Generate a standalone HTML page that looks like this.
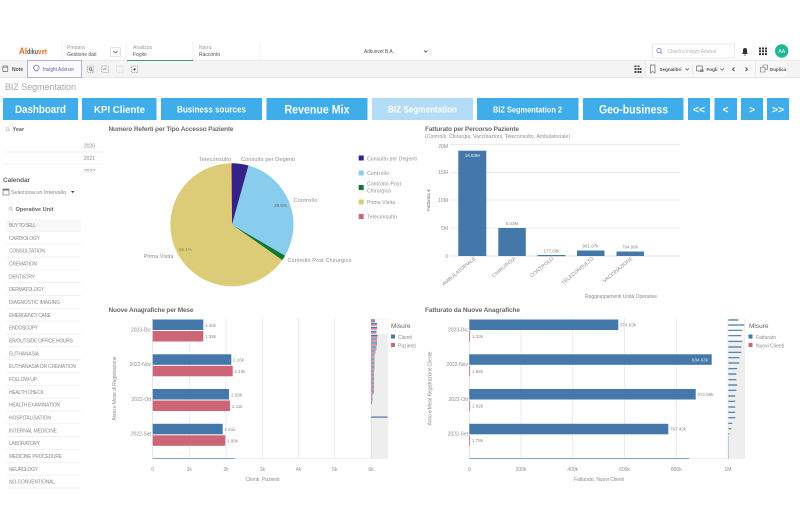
<!DOCTYPE html>
<html><head><meta charset="utf-8"><style>
html,body{margin:0;padding:0;background:#fff;overflow:hidden}
svg{display:block;font-family:"Liberation Sans",sans-serif;filter:blur(.3px)}
text{fill:#8c8c8c;font-size:5.5px}
.b{fill:#fff;font-weight:bold;text-anchor:middle}
.t{fill:#6a6a6a;font-weight:bold;font-size:6.5px}
.l{fill:#8f8f8f;font-size:5px}
.g{stroke:#e6e6e6;stroke-width:.8}
.r{stroke:#eeeeee;stroke-width:.7}
</style></head><body>
<svg width="800" height="530" viewBox="0 0 800 530" xmlns="http://www.w3.org/2000/svg">
<rect width="800" height="530" fill="#fff"/>

<!-- header -->
<text x="19" y="54" style="font-size:9px;font-weight:bold;fill:#e2711d" textLength="8" lengthAdjust="spacingAndGlyphs">AI</text>
<text x="27" y="54" style="font-size:7px;font-weight:bold;fill:#5b5b5b" textLength="11" lengthAdjust="spacingAndGlyphs">diku</text>
<text x="38" y="54" style="font-size:7px;font-weight:bold;fill:#e2711d" textLength="9" lengthAdjust="spacingAndGlyphs">vet</text>
<path d="M62 41V60M126 41V60M193 41V60M260 41V60" stroke="#efefef" stroke-width=".8"/>
<text x="67" y="49" style="font-size:5px;fill:#999">Prepara</text>
<text x="67" y="56" style="font-size:5px;fill:#555">Gestione dati</text>
<rect x="110.500" y="47.500" width="10" height="9" rx="1" fill="#fff" stroke="#ccc" stroke-width=".6"/>
<path d="M113.500 51l2 2 2-2" fill="none" stroke="#555" stroke-width=".7"/>
<text x="133" y="49" style="font-size:5px;fill:#999">Analizza</text>
<text x="133" y="56" style="font-size:5px;fill:#555">Foglio</text>
<text x="199" y="49" style="font-size:5px;fill:#999">Narra</text>
<text x="199" y="56" style="font-size:5px;fill:#555">Racconto</text>
<text x="364" y="53" style="font-size:5.500px;fill:#555" textLength="30" lengthAdjust="spacingAndGlyphs">Adkunvet B.A.</text>
<path d="M424 50.500l1.700 1.700 1.700-1.700" fill="none" stroke="#444" stroke-width=".8"/>
<rect x="652.500" y="44" width="82" height="14" rx="1.500" fill="#fff" stroke="#e4e4e4" stroke-width=".8"/>
<circle cx="659" cy="50.500" r="2.200" fill="none" stroke="#8a85c6" stroke-width=".8"/>
<path d="M660.600 52.200l1.800 1.800" stroke="#8a85c6" stroke-width=".8"/>
<text x="667.500" y="53" style="font-size:5px;fill:#b5b5b5" textLength="49" lengthAdjust="spacingAndGlyphs">Chiedi a Insight Advisor</text>
<path d="M742 54h6l-1-1.500v-2.500a2 2 0 0 0-4 0v2.500zM744.300 54.500h1.400v1h-1.400z" fill="#333"/>
<path d="M759 48h2v2h-2zM762 48h2v2h-2zM765 48h2v2h-2zM759 50.800h2v2h-2zM762 50.800h2v2h-2zM765 50.800h2v2h-2zM759 53.600h2v2h-2zM762 53.600h2v2h-2zM765 53.600h2v2h-2z" fill="#333" transform="translate(0 -.5)"/>
<circle cx="781.700" cy="51" r="6.700" fill="#1fb893"/>
<text x="781.700" y="53" style="font-size:5px;fill:#fff;text-anchor:middle">AA</text>

<!-- toolbar -->
<rect x="0" y="60.500" width="800" height="17" fill="#f4f4f4"/>
<path d="M0 60.500H800" stroke="#e4e4e4" stroke-width=".7"/>
<path d="M0 77.500H800" stroke="#dcdcdc" stroke-width=".8"/>
<rect x="127" y="60" width="66" height="1" fill="#3f9a6c"/>
<rect x="2.800" y="66" width="5" height="5.500" rx=".7" fill="none" stroke="#666" stroke-width=".7"/>
<path d="M2.800 67.300h5" stroke="#666" stroke-width=".5"/>
<text x="12" y="71" style="font-size:5px;fill:#555;font-weight:bold">Note</text>
<rect x="27.500" y="60.500" width="54" height="17" fill="#fbfbfb" stroke="#a29fd3" stroke-width=".8"/>
<path d="M33.500 68a2.800 2.800 0 0 1 5.600 0c0 1-1.600 1.400-1.600 2.800h-2.400c0-1.400-1.600-1.800-1.600-2.800z" fill="none" stroke="#8a85c6" stroke-width=".9"/>
<text x="43" y="71" style="font-size:5px;fill:#8a85c6;font-weight:bold" textLength="31" lengthAdjust="spacingAndGlyphs">Insight Advisor</text>
<rect x="87.300" y="66" width="6.500" height="6.500" fill="none" stroke="#888" stroke-width=".7" stroke-dasharray="1 1"/>
<circle cx="90.500" cy="69" r="1.300" fill="none" stroke="#555" stroke-width=".6"/>
<path d="M91.500 70l1.300 1.300" stroke="#555" stroke-width=".6"/>
<rect x="101.800" y="66" width="6.500" height="6.500" fill="none" stroke="#888" stroke-width=".7" stroke-dasharray="1 1"/>
<path d="M103.300 69h3l-1-1M103.300 69l1 1" fill="none" stroke="#666" stroke-width=".5"/>
<rect x="116.500" y="66" width="6.500" height="6.500" fill="none" stroke="#ccc" stroke-width=".7" stroke-dasharray="1 1"/>
<rect x="131.300" y="66" width="6.500" height="6.500" fill="none" stroke="#888" stroke-width=".7" stroke-dasharray="1 1"/>
<circle cx="134.500" cy="69.300" r="1.100" fill="#444"/>
<rect x="646" y="61" width="109" height="16" fill="#f8f8f8"/>
<rect x="756" y="61" width="30" height="16" fill="#f8f8f8"/>
<rect x="755.300" y="61" width=".7" height="16" fill="#e6e6e6"/>
<rect x="645.500" y="61" width=".7" height="16" fill="#e6e6e6"/>
<rect x="692.500" y="64" width=".6" height="10" fill="#ddd"/>
<path d="M634.500 65.500h2v1.500h-2zM637.500 65.500h2v1.500h-2zM634.500 68h2v2h-2zM637.500 68h2v2h-2zM640 68h1.500v2H640zM634.500 71h2v2h-2zM637.500 71h2v2h-2zM640 71h1.500v2H640z" fill="#444"/>
<path d="M650.500 65h4.500v8l-2.250-1.500L650.500 73z" fill="none" stroke="#666" stroke-width=".7"/>
<text x="659.500" y="71" style="font-size:4.800px;fill:#555;font-weight:bold" textLength="22" lengthAdjust="spacingAndGlyphs">Segnalibri</text>
<path d="M685.500 68.500l1.700 1.700 1.700-1.700" fill="none" stroke="#555" stroke-width=".7"/>
<rect x="696.500" y="66" width="6" height="5" rx=".7" fill="none" stroke="#666" stroke-width=".7"/>
<rect x="700" y="69.500" width="3.500" height="2.500" fill="#888"/>
<text x="706.500" y="71" style="font-size:4.800px;fill:#555;font-weight:bold" textLength="11" lengthAdjust="spacingAndGlyphs">Fogli</text>
<path d="M720.500 68.500l1.700 1.700 1.700-1.700" fill="none" stroke="#555" stroke-width=".7"/>
<path d="M734.500 67.500l-1.800 1.800 1.800 1.800M745.500 67.500l1.800 1.800-1.800 1.800" fill="none" stroke="#444" stroke-width=".9"/>
<path d="M760.500 67.500h4.500v4.500h-4.500zM763 67.500v-2.500h4.500v4.500H765" fill="none" stroke="#666" stroke-width=".6"/>
<text x="770" y="71" style="font-size:4.800px;fill:#555;font-weight:bold" textLength="16" lengthAdjust="spacingAndGlyphs">Duplica</text>

<!-- title -->
<text x="5" y="90" style="font-size:9px;fill:#a8a8a8" textLength="71">BIZ Segmentation</text>

<!-- nav buttons -->
<g fill="#3fadea">
<rect x="3" y="98" width="75" height="22"/><rect x="82" y="98" width="74.500" height="22"/><rect x="161" y="98" width="101" height="22"/><rect x="266.500" y="98" width="101" height="22"/>
<rect x="372" y="98" width="101" height="22" fill="#b3dcf6"/>
<rect x="477" y="98" width="101.500" height="22"/><rect x="583" y="98" width="100.500" height="22"/>
<rect x="688" y="98" width="22" height="22"/><rect x="714.500" y="98" width="22.500" height="22"/><rect x="741" y="98" width="22" height="22"/><rect x="767" y="98" width="22" height="22"/>
</g>
<text class="b" x="40.500" y="113" style="font-size:11px" textLength="51" lengthAdjust="spacingAndGlyphs">Dashboard</text>
<text class="b" x="119.500" y="113" style="font-size:10.500px" textLength="51" lengthAdjust="spacingAndGlyphs">KPI Cliente</text>
<text class="b" x="211.500" y="112.500" style="font-size:9px" textLength="69" lengthAdjust="spacingAndGlyphs">Business sources</text>
<text class="b" x="317" y="113.500" style="font-size:12px" textLength="65" lengthAdjust="spacingAndGlyphs">Revenue Mix</text>
<text class="b" x="422.500" y="112.500" style="font-size:9px" textLength="69" lengthAdjust="spacingAndGlyphs">BIZ Segmentation</text>
<text class="b" x="527.500" y="112.500" style="font-size:8.500px" textLength="69" lengthAdjust="spacingAndGlyphs">BIZ Segmentation 2</text>
<text class="b" x="633.500" y="113.500" style="font-size:12px" textLength="69" lengthAdjust="spacingAndGlyphs">Geo-business</text>
<text class="b" x="699" y="113" style="font-size:10px" textLength="12" lengthAdjust="spacingAndGlyphs">&lt;&lt;</text>
<text class="b" x="725.500" y="113" style="font-size:10px">&lt;</text>
<text class="b" x="752" y="113" style="font-size:10px">&gt;</text>
<text class="b" x="778" y="113" style="font-size:10px" textLength="12" lengthAdjust="spacingAndGlyphs">&gt;&gt;</text>

<!-- sidebar -->
<circle cx="7.500" cy="129" r="1.500" fill="none" stroke="#aaa" stroke-width=".6"/><path d="M8.500 130l1.200 1.200" stroke="#aaa" stroke-width=".6"/>
<text x="12.500" y="131" style="font-size:5.500px;font-weight:bold;fill:#666">Year</text>
<path d="M3 152H104M3 164H104" stroke="#ececec" stroke-width=".7"/>
<text x="95" y="147.500" style="font-size:5px;text-anchor:end">2020</text>
<text x="95" y="160" style="font-size:5px;text-anchor:end">2021</text>
<clipPath id="yc"><rect x="0" y="165" width="105" height="6.700"/></clipPath>
<text x="95" y="173" style="font-size:5px;text-anchor:end" clip-path="url(#yc)">2022</text>
<text x="3" y="182" style="font-size:6.500px;font-weight:bold;fill:#666" textLength="27">Calendar</text>
<rect x="3" y="189" width="6" height="6" fill="#fff" stroke="#777" stroke-width=".7"/>
<rect x="3" y="189" width="6" height="1.500" fill="#777"/>
<text x="11" y="194" style="font-size:5.500px;fill:#888" textLength="55">Seleziona un Intervallo</text>
<path d="M71 191h3.500l-1.750 2.300z" fill="#444"/>
<circle cx="10.500" cy="208.500" r="1.500" fill="none" stroke="#aaa" stroke-width=".6"/><path d="M11.500 209.500l1.200 1.200" stroke="#aaa" stroke-width=".6"/>
<text x="15.500" y="211" style="font-size:5.500px;font-weight:bold;fill:#666" textLength="38">Operative Unit</text>
<rect x="6" y="219" width="75" height="12" fill="#f8f8f8"/>
<path class="r" d="M6 231.300H81M6 244.100H81M6 257H81M6 269.800H81M6 282.600H81M6 295.500H81M6 308.300H81M6 321.100H81M6 334H81M6 346.800H81M6 359.600H81M6 372.500H81M6 385.300H81M6 398.100H81M6 411H81M6 423.800H81M6 436.600H81M6 449.500H81M6 462.300H81M6 475.100H81M6 488H81"/>
<g>
<text x="9" y="227" style="font-size:5px" textLength="27">BUY TO SELL</text>
<text x="9" y="239.800" style="font-size:5px" textLength="31">CARDIOLOGY</text>
<text x="9" y="252.600" style="font-size:5px" textLength="36">CONSULTATION</text>
<text x="9" y="265.500" style="font-size:5px" textLength="28">CREMATION</text>
<text x="9" y="278.300" style="font-size:5px" textLength="26">DENTISTRY</text>
<text x="9" y="291.100" style="font-size:5px" textLength="35">DERMATOLOGY</text>
<text x="9" y="304" style="font-size:5px" textLength="51">DIAGNOSTIC IMAGING</text>
<text x="9" y="316.800" style="font-size:5px" textLength="42">EMERGENCY CARE</text>
<text x="9" y="329.600" style="font-size:5px" textLength="29">ENDOSCOPY</text>
<text x="9" y="342.500" style="font-size:5px" textLength="64">ER/OUTSIDE OFFICE HOURS</text>
<text x="9" y="355.300" style="font-size:5px" textLength="30">EUTHANASIA</text>
<text x="9" y="368.100" style="font-size:5px" textLength="67">EUTHANASIA OR CREMATION</text>
<text x="9" y="381" style="font-size:5px" textLength="28">FOLLOW-UP</text>
<text x="9" y="393.800" style="font-size:5px" textLength="35">HEALTH CHECK</text>
<text x="9" y="406.600" style="font-size:5px" textLength="51">HEALTH EXAMINATION</text>
<text x="9" y="419.500" style="font-size:5px" textLength="42">HOSPITALISATION</text>
<text x="9" y="432.300" style="font-size:5px" textLength="48">INTERNAL MEDICINE</text>
<text x="9" y="445.100" style="font-size:5px" textLength="31">LABORATORY</text>
<text x="9" y="458" style="font-size:5px" textLength="53">MEDICINE PROCEDURE</text>
<text x="9" y="470.800" style="font-size:5px" textLength="29">NEUROLOGY</text>
<text x="9" y="483.600" style="font-size:5px" textLength="46">NO-CONVENTIONAL</text>
</g>

<!-- pie -->
<text class="t" x="108.500" y="131" textLength="125">Numero Referti per Tipo Accesso Paziente</text>
<path d="M232 224.700L232 163.200A61.500 61.500 0 0 1 248.500 165.500Z" fill="#332288"/>
<path d="M232 224.700L248.500 165.500A61.500 61.500 0 0 1 285.100 255.700Z" fill="#88ccee"/>
<path d="M232 224.700L285.100 255.700A61.500 61.500 0 0 1 282.200 260.100Z" fill="#117733"/>
<path d="M232 224.700L282.200 260.100A61.500 61.500 0 1 1 230.900 163.200Z" fill="#ddcc77"/>
<path d="M232 224.700L230.900 163.200L232 163.200Z" fill="#cc6677"/>
<text x="199" y="161" style="font-size:5.500px" textLength="32">Teleconsulto</text>
<text x="241" y="161" style="font-size:5.500px" textLength="54">Consulto per Degenti</text>
<text x="293.500" y="202" style="font-size:5.500px" textLength="24">Controllo</text>
<text x="287.500" y="262" style="font-size:5.500px" textLength="64">Controllo Post Chirurgico</text>
<text x="143.500" y="258" style="font-size:5.500px" textLength="30">Prima Visita</text>
<text x="274" y="207" style="font-size:4.500px;fill:#666">39.5%</text>
<text x="179" y="251" style="font-size:4.500px;fill:#8b8552">65.1%</text>
<rect x="358.700" y="155.500" width="5" height="5" fill="#332288"/><text x="367" y="160.500" style="font-size:5px" textLength="50">Consulto per Degenti</text>
<rect x="358.700" y="170.500" width="5" height="5" fill="#88ccee"/><text x="367" y="175" style="font-size:5px" textLength="22">Controllo</text>
<rect x="358.700" y="185" width="5" height="5" fill="#117733"/><text x="367" y="185.500" style="font-size:5px" textLength="34">Controllo Post</text><text x="367" y="192.500" style="font-size:5px" textLength="24">Chirurgico</text>
<rect x="358.700" y="199.500" width="5" height="5" fill="#ddcc77"/><text x="367" y="204" style="font-size:5px" textLength="28">Prima Visita</text>
<rect x="358.700" y="214" width="5" height="5" fill="#cc6677"/><text x="367" y="218.500" style="font-size:5px" textLength="30">Teleconsulto</text>

<!-- column chart -->
<text class="t" x="425" y="131" textLength="94">Fatturato per Percorso Paziente</text>
<text x="425" y="138" style="font-size:5px" textLength="145">(Controlli, Chirurgia, Vaccinazioni, Teleconsulto, Ambulatoriale)</text>
<path class="g" d="M450 144.300H680M450 172.300H680M450 200H680M450 228H680"/>
<path d="M450 256H680" stroke="#d8d8d8" stroke-width=".8"/>
<g fill="#4477aa">
<rect x="458.300" y="150.700" width="28" height="105.300"/>
<rect x="498.300" y="228" width="27.500" height="28"/>
<rect x="537.500" y="255" width="28" height="1.200"/>
<rect x="577" y="250.500" width="27.500" height="5.500"/>
<rect x="616.500" y="251.500" width="27.500" height="4.500"/>
</g>
<text x="448" y="148" class="l" text-anchor="end">20M</text>
<text x="448" y="174" class="l" text-anchor="end">15M</text>
<text x="448" y="202" class="l" text-anchor="end">10M</text>
<text x="448" y="230" class="l" text-anchor="end">5M</text>
<text x="448" y="258" class="l" text-anchor="end">0</text>
<text x="472.300" y="157" style="font-size:4.500px;fill:#e8eef5;text-anchor:middle">18.83M</text>
<text x="512" y="225" style="font-size:4.500px;text-anchor:middle">5.03M</text>
<text x="551.500" y="252.500" style="font-size:4.500px;text-anchor:middle">177.68k</text>
<text x="590.500" y="247.500" style="font-size:4.500px;text-anchor:middle">981.07k</text>
<text x="630" y="248.500" style="font-size:4.500px;text-anchor:middle">794.98k</text>
<text transform="translate(430 200) rotate(-90)" style="font-size:4.500px;fill:#666;text-anchor:middle">Fatturato €</text>
<text transform="translate(476 259) rotate(-40)" style="font-size:5px;text-anchor:end" textLength="42">AMBULATORIALE</text>
<text transform="translate(516 259) rotate(-40)" style="font-size:5px;text-anchor:end" textLength="29">CHIRURGIA</text>
<text transform="translate(554 259) rotate(-40)" style="font-size:5px;text-anchor:end" textLength="29">CONTROLLI</text>
<text transform="translate(594 259) rotate(-40)" style="font-size:5px;text-anchor:end" textLength="40">TELECONSULTO</text>
<text transform="translate(633 259) rotate(-40)" style="font-size:5px;text-anchor:end" textLength="37">VACCINAZIONE</text>
<text x="585" y="298" style="font-size:5px" textLength="72">Raggruppamenti Unità Operative</text>

<!-- chart 3 -->
<text class="t" x="108.500" y="312" textLength="85">Nuove Anagrafiche per Mese</text>
<path class="g" d="M189.300 318V459M226 318V459M262.500 318V459M298.500 318V459M334.700 318V459M371 318V459"/>
<path d="M152.700 318V459" stroke="#ddd" stroke-width=".8"/>
<g fill="#4477aa"><rect x="152.700" y="319.500" width="50.600" height="10.500"/><rect x="152.700" y="354.300" width="78.600" height="10.500"/><rect x="152.700" y="389" width="76.300" height="10.500"/><rect x="152.700" y="423.800" width="70" height="10.500"/></g>
<g fill="#cc6677"><rect x="152.700" y="331" width="50.600" height="10.500"/><rect x="152.700" y="365.800" width="80" height="10.500"/><rect x="152.700" y="400.500" width="77.300" height="10.500"/><rect x="152.700" y="435.300" width="72.600" height="10.500"/></g>
<text x="205" y="327" style="font-size:4.500px">1.38k</text><text x="205" y="338" style="font-size:4.500px">1.38k</text>
<text x="233" y="361.500" style="font-size:4.500px">2.16k</text><text x="234.500" y="373" style="font-size:4.500px">2.19k</text>
<text x="231" y="396.500" style="font-size:4.500px">2.09k</text><text x="232" y="408" style="font-size:4.500px">2.11k</text>
<text x="224.500" y="431" style="font-size:4.500px">1.91k</text><text x="227" y="442.500" style="font-size:4.500px">1.98k</text>
<text x="151" y="331.500" style="font-size:5px" text-anchor="end">2023-Dic</text>
<text x="151" y="366" style="font-size:5px" text-anchor="end">2022-Nov</text>
<text x="151" y="401" style="font-size:5px" text-anchor="end">2022-Ott</text>
<text x="151" y="435.500" style="font-size:5px" text-anchor="end">2022-Set</text>
<text transform="translate(116 388.500) rotate(-90)" style="font-size:5px;text-anchor:middle" textLength="64">Anno e Mese di Registrazione</text>
<text x="152.700" y="471" class="l" text-anchor="middle">0</text><text x="189.300" y="471" class="l" text-anchor="middle">1k</text><text x="226" y="471" class="l" text-anchor="middle">2k</text><text x="262.500" y="471" class="l" text-anchor="middle">3k</text><text x="298.500" y="471" class="l" text-anchor="middle">4k</text><text x="334.700" y="471" class="l" text-anchor="middle">5k</text><text x="371" y="471" class="l" text-anchor="middle">6k</text>
<text x="245.500" y="481" style="font-size:5px" textLength="34">Clienti, Pazienti</text>
<rect x="152.700" y="458" width="82" height="1" fill="#7fa3c8"/>
<rect x="235" y="458" width="136" height="1" fill="#eee"/>
<rect x="371" y="319" width="17" height="140" fill="#eeeeee"/>
<rect x="371" y="319" width="17" height="15.500" fill="#fff" stroke="#e2e2e2" stroke-width=".4"/>
<path d="M371 320h4M371 323.500h6M371 327.500h6M371 331.500h5.500M371 335.500h6.500M371 339h6M371 343h6M371 347h5.500M371 351h4.500M371 355h3.500M371 359h3.500M371 363h3.500M371 367h3.500M371 371h3M371 375h3M371 379h3M371 383h3M371 387h3M371 391h3M371 395h1.500M371 399h1.500M371 403h1" stroke="#4477aa" stroke-width="1.200"/>
<path d="M371 321.500h4M371 325h6M371 329h6M371 333h5.500M371 337h6.500M371 341h6M371 345h6M371 349h5.500M371 353h4.500M371 357h3.500M371 361h3.500M371 365h3.500M371 369h3.500M371 373h3M371 377h3M371 381h3M371 385h3M371 389h3M371 393h3M371 397h1.500M371 401h1.500" stroke="#cc6677" stroke-width="1.200"/>
<rect x="371" y="416.500" width="16.500" height="1.200" fill="#4477aa"/>
<path d="M371.300 404V459" stroke="#ccc" stroke-width=".5" stroke-dasharray="1 1"/>
<text x="391" y="328" style="font-size:6.500px;fill:#666">Misure</text>
<rect x="391" y="334.500" width="4" height="4" fill="#4477aa"/><text x="398" y="339" style="font-size:5px">Clienti</text>
<rect x="391" y="343" width="4" height="4" fill="#cc6677"/><text x="398" y="347.500" style="font-size:5px">Pazienti</text>

<!-- chart 4 -->
<text class="t" x="425" y="312" textLength="95">Fatturato da Nuove Anagrafiche</text>
<path class="g" d="M521 318V459M572.700 318V459M624.500 318V459M676.300 318V459M728 318V459"/>
<path d="M469.300 318V459" stroke="#ddd" stroke-width=".8"/>
<g fill="#4477aa"><rect x="469.300" y="319.500" width="149" height="10.500"/><rect x="469.300" y="354.300" width="242.400" height="10.500"/><rect x="469.300" y="389" width="226.400" height="10.500"/><rect x="469.300" y="423.800" width="199" height="10.500"/></g>
<g fill="#cc6677"><rect x="469.300" y="331" width=".8" height="10.500"/><rect x="469.300" y="365.800" width=".8" height="10.500"/><rect x="469.300" y="400.500" width=".8" height="10.500"/><rect x="469.300" y="435.300" width=".8" height="10.500"/></g>
<text x="620" y="326.500" style="font-size:4.500px">574.83k</text><text x="472" y="338" style="font-size:4.500px">1.33k</text>
<text x="692" y="361.500" style="font-size:4.500px;fill:#dfe8f1">934.63k</text><text x="472" y="373" style="font-size:4.500px">1.98k</text>
<text x="697.500" y="396" style="font-size:4.500px">872.68k</text><text x="472" y="407.500" style="font-size:4.500px">1.92k</text>
<text x="670" y="430.500" style="font-size:4.500px">767.42k</text><text x="472" y="442" style="font-size:4.500px">1.78k</text>
<text x="468" y="331.500" style="font-size:5px" text-anchor="end">2023-Dic</text>
<text x="468" y="366" style="font-size:5px" text-anchor="end">2022-Nov</text>
<text x="468" y="401" style="font-size:5px" text-anchor="end">2022-Ott</text>
<text x="468" y="435.500" style="font-size:5px" text-anchor="end">2022-Set</text>
<text transform="translate(431.500 388.500) rotate(-90)" style="font-size:5px;text-anchor:middle" textLength="74">Anno e Mese Registrazione Cliente</text>
<text x="469.300" y="471" class="l" text-anchor="middle">0</text><text x="521" y="471" class="l" text-anchor="middle">200k</text><text x="572.700" y="471" class="l" text-anchor="middle">400k</text><text x="624.500" y="471" class="l" text-anchor="middle">600k</text><text x="676.300" y="471" class="l" text-anchor="middle">800k</text><text x="728" y="471" class="l" text-anchor="middle">1M</text>
<text x="574" y="481" style="font-size:5px" textLength="50">Fatturato, Nuovi Clienti</text>
<rect x="469.300" y="458" width="220" height="1" fill="#7fa3c8"/>
<rect x="689" y="458" width="39" height="1" fill="#eee"/>
<rect x="728" y="319" width="17" height="140" fill="#eeeeee"/>
<rect x="728" y="319" width="16.500" height="22" fill="#fff" stroke="#e2e2e2" stroke-width=".4"/>
<path d="M728.300 320h10M728.300 325h16M728.300 330.300h14M728.300 335.700h13M728.300 341.300h14M728.300 347h13M728.300 352.300h13M728.300 357.700h11M728.300 363h11M728.300 368.700h9M728.300 374h8M728.300 379.700h8M728.300 385h9M728.300 390.300h8M728.300 396h7M728.300 401.300h7M728.300 407h7M728.300 412.300h7M728.300 417.700h7M728.300 423.300h4M728.300 428.700h3M728.300 434h1" stroke="#4477aa" stroke-width="1.200"/>
<path d="M728.300 436V459" stroke="#9db6d0" stroke-width=".6"/>
<text x="749" y="328" style="font-size:6.500px;fill:#666">Misure</text>
<rect x="748.500" y="334.500" width="4" height="4" fill="#4477aa"/><text x="756" y="339" style="font-size:5px">Fatturato</text>
<rect x="748.500" y="343" width="4" height="4" fill="#cc6677"/><text x="756" y="347.500" style="font-size:5px">Nuovi Clienti</text>
</svg>
</body></html>
